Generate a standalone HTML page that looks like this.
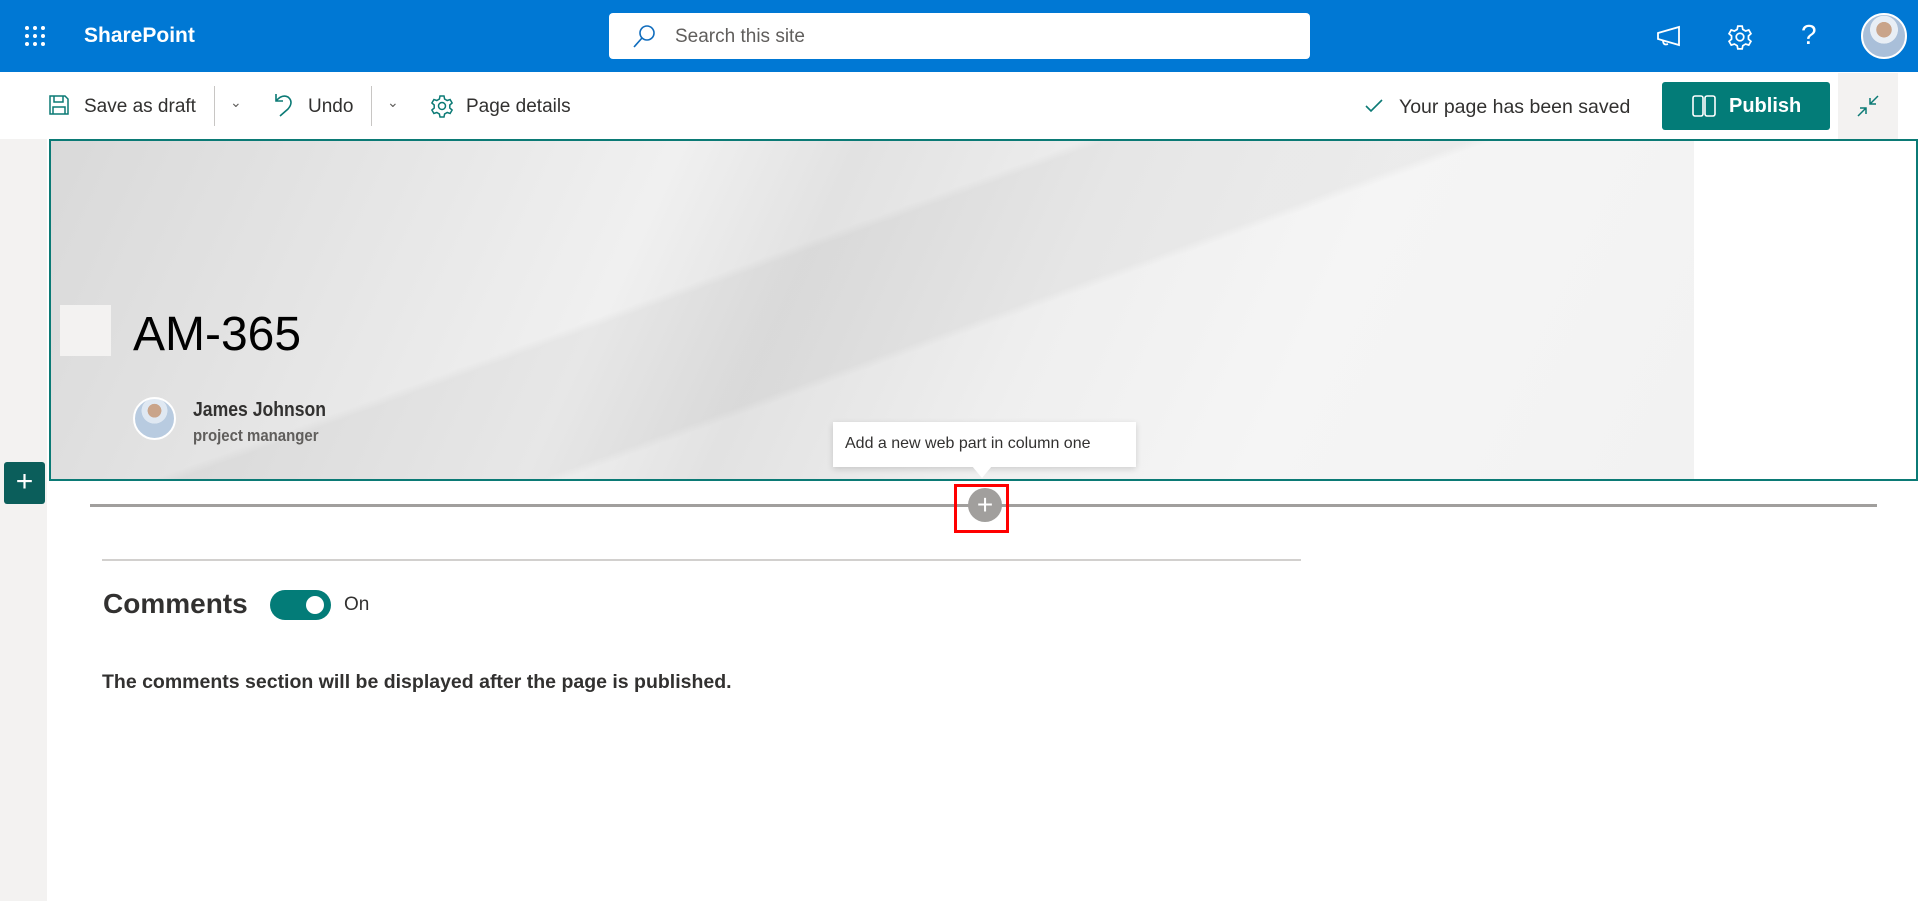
<!DOCTYPE html>
<html><head><meta charset="utf-8"><style>
*{margin:0;padding:0;box-sizing:border-box}
body{width:1918px;height:901px;overflow:hidden;background:#fff;font-family:"Liberation Sans",sans-serif;position:relative;color:#323130}
.abs{position:absolute}
#top{left:0;top:0;width:1918px;height:72px;background:#0078d4}
#cmd{left:0;top:72px;width:1918px;height:67px;background:#fff}
.ct{font-size:19px;color:#323130;top:96px}
</style></head><body>
<div id="top" class="abs">
 <svg class="abs" style="left:24px;top:25px" width="22" height="22" viewBox="0 0 22 22" fill="#fff">
  <circle cx="3" cy="3" r="2"/><circle cx="11" cy="3" r="2"/><circle cx="19" cy="3" r="2"/>
  <circle cx="3" cy="11" r="2"/><circle cx="11" cy="11" r="2"/><circle cx="19" cy="11" r="2"/>
  <circle cx="3" cy="19" r="2"/><circle cx="11" cy="19" r="2"/><circle cx="19" cy="19" r="2"/></svg>
 <div class="abs" style="left:84px;top:24px;color:#fff;font-size:21px;font-weight:bold">SharePoint</div>
 <div class="abs" style="left:609px;top:13px;width:701px;height:46px;background:#fff;border-radius:4px">
  <svg class="abs" style="left:22px;top:11px" width="26" height="26" viewBox="0 0 26 26" fill="none" stroke="#0f6cbd" stroke-width="1.6"><circle cx="16" cy="9" r="7"/><path d="M11 14 L3 23"/></svg>
  <div class="abs" style="left:66px;top:13px;font-size:19px;color:#605e5c">Search this site</div>
 </div>
 <svg class="abs" style="left:1655px;top:24px" width="30" height="26" viewBox="0 0 30 26" fill="none" stroke="#fff" stroke-width="1.8"><path d="M3 9 L24 3 L24 21 L3 15 Z M8 16 Q8 22 13 20"/></svg>
 <svg class="abs" style="left:1727px;top:24px" width="26" height="26" viewBox="0 0 24 24" fill="none" stroke="#fff" stroke-width="1.6"><circle cx="12" cy="12" r="3.5"/><path d="M10 2h4l.6 3 2.6 1.5 2.9-1 2 3.5-2.3 2v3l2.3 2-2 3.5-2.9-1-2.6 1.5-.6 3h-4l-.6-3-2.6-1.5-2.9 1-2-3.5 2.3-2v-3l-2.3-2 2-3.5 2.9 1L9.4 5z"/></svg>
 <div class="abs" style="left:1801px;top:19px;color:#fff;font-size:28px">?</div>
 <div class="abs" style="left:1861px;top:13px;width:46px;height:46px;border-radius:50%;background:radial-gradient(circle at 50% 35%,#c9a48a 0 22%,#e8eef5 23% 40%,#a9bfd9 41%);border:2px solid #fff"></div>
</div>
<div id="cmd" class="abs"></div>
<svg class="abs" style="left:48px;top:94px" width="22" height="22" viewBox="0 0 22 22" fill="none" stroke="#0b7a75" stroke-width="1.5"><path d="M2 2h15l3 3v15H2z M6 2v6h9V2 M5 20v-7h12v7"/></svg>
<div class="abs ct" style="left:84px">Save as draft</div>
<div class="abs" style="left:214px;top:86px;width:1px;height:40px;background:#c8c6c4"></div>
<div class="abs" style="left:230px;top:94px;font-size:14px;color:#605e5c">&#8964;</div>
<svg class="abs" style="left:272px;top:92px" width="24" height="26" viewBox="0 0 24 26" fill="none" stroke="#0b7a75" stroke-width="1.6"><path d="M4 2v7h7 M4 9 Q10 2 16 5 Q22 10 16 17 L8 24"/></svg>
<div class="abs ct" style="left:308px">Undo</div>
<div class="abs" style="left:371px;top:86px;width:1px;height:40px;background:#c8c6c4"></div>
<div class="abs" style="left:387px;top:94px;font-size:14px;color:#605e5c">&#8964;</div>
<svg class="abs" style="left:430px;top:94px" width="24" height="24" viewBox="0 0 24 24" fill="none" stroke="#0b7a75" stroke-width="1.5"><circle cx="12" cy="12" r="3.5"/><path d="M10 2h4l.6 3 2.6 1.5 2.9-1 2 3.5-2.3 2v3l2.3 2-2 3.5-2.9-1-2.6 1.5-.6 3h-4l-.6-3-2.6-1.5-2.9 1-2-3.5 2.3-2v-3l-2.3-2 2-3.5 2.9 1L9.4 5z"/></svg>
<div class="abs ct" style="left:466px">Page details</div>
<svg class="abs" style="left:1365px;top:98px" width="18" height="16" viewBox="0 0 18 16" fill="none" stroke="#0b7a75" stroke-width="1.6"><path d="M1 8l5 5L17 2"/></svg>
<div class="abs ct" style="left:1399px;font-size:19.5px">Your page has been saved</div>
<div class="abs" style="left:1662px;top:82px;width:168px;height:48px;background:#037c78;border-radius:3px">
 <svg class="abs" style="left:30px;top:13px" width="24" height="22" viewBox="0 0 24 22" fill="none" stroke="#fff" stroke-width="1.6"><rect x="1" y="1" width="10" height="20" rx="2"/><rect x="13" y="1" width="10" height="20" rx="2"/></svg>
 <div class="abs" style="left:67px;top:13px;color:#fff;font-size:20px;font-weight:bold">Publish</div>
</div>
<div class="abs" style="left:1838px;top:73px;width:60px;height:66px;background:#f3f2f1">
 <svg class="abs" style="left:18px;top:21px" width="24" height="24" viewBox="0 0 24 24" fill="none" stroke="#0b7a75" stroke-width="1.5"><path d="M22 2l-8 8 M14 4v6h6 M2 22l8-8 M10 20v-6H4"/></svg>
</div>
<div class="abs" style="left:0;top:139px;width:47px;height:762px;background:#f3f2f1"></div>
<div class="abs" style="left:49px;top:139px;width:1869px;height:342px;border:2px solid #0b7a75;background:#fff;overflow:hidden">
 <div class="abs" style="left:0;top:0;width:1643px;height:340px;background:linear-gradient(115deg,#d9d9d9 0%,#e6e6e6 20%,#f0f0f0 35%,#e2e2e2 45%,#efefef 60%,#f5f5f5 75%,#f2f2f2 100%)"></div>
 <div class="abs" style="left:0;top:0;width:1643px;height:340px;background:linear-gradient(160deg,transparent 40%,rgba(0,0,0,.04) 41% 55%,transparent 56%)"></div>
 <div class="abs" style="left:9px;top:164px;width:51px;height:51px;background:#f3f2f1"></div>
 <div class="abs" style="left:82px;top:166px;font-size:48px;color:#000">AM-365</div>
 <div class="abs" style="left:82px;top:256px;width:43px;height:43px;border-radius:50%;background:radial-gradient(circle at 50% 30%,#c9a48a 0 20%,#dfe8f2 21% 38%,#b8cbe0 39%);border:2px solid #fff"></div>
 <div class="abs" style="left:142px;top:258px;font-size:20px;color:#323130;font-weight:bold;transform:scaleX(.88);transform-origin:left">James Johnson</div>
 <div class="abs" style="left:142px;top:285px;font-size:17px;color:#605e5c;font-weight:bold;transform:scaleX(.88);transform-origin:left">project mananger</div>
</div>
<div class="abs" style="left:49px;top:480px;width:1869px;border-top:1px dotted #0b7a75"></div>
<div class="abs" style="left:833px;top:422px;width:303px;height:45px;background:#fff;box-shadow:0 2px 6px rgba(0,0,0,.15);font-size:16px;color:#323130;padding:13px 0 0 12px">Add a new web part in column one</div>
<div class="abs" style="left:972px;top:466px;width:0;height:0;border-left:10px solid transparent;border-right:10px solid transparent;border-top:12px solid #fff"></div>
<div class="abs" style="left:4px;top:462px;width:41px;height:42px;background:#0b5e5b;border-radius:3px;color:#fff;font-size:30px;line-height:40px;text-align:center">+</div>
<div class="abs" style="left:90px;top:504px;width:1787px;height:3px;background:#a19f9d"></div>
<div class="abs" style="left:968px;top:488px;width:34px;height:34px;border-radius:50%;background:#a19f9d;color:#fff;font-size:28px;line-height:33px;text-align:center">+</div>
<div class="abs" style="left:954px;top:484px;width:55px;height:49px;border:3px solid #f00"></div>
<div class="abs" style="left:102px;top:559px;width:1199px;height:2px;background:#d2d0ce"></div>
<div class="abs" style="left:103px;top:588px;font-size:28px;font-weight:bold;color:#323130">Comments</div>
<div class="abs" style="left:270px;top:590px;width:61px;height:30px;border-radius:15px;background:#037c78"><div class="abs" style="left:36px;top:6px;width:18px;height:18px;border-radius:50%;background:#fff"></div></div>
<div class="abs" style="left:344px;top:594px;font-size:19px;color:#323130">On</div>
<div class="abs" style="left:102px;top:671px;font-size:19.5px;font-weight:bold;color:#323130">The comments section will be displayed after the page is published.</div>
</body></html>
